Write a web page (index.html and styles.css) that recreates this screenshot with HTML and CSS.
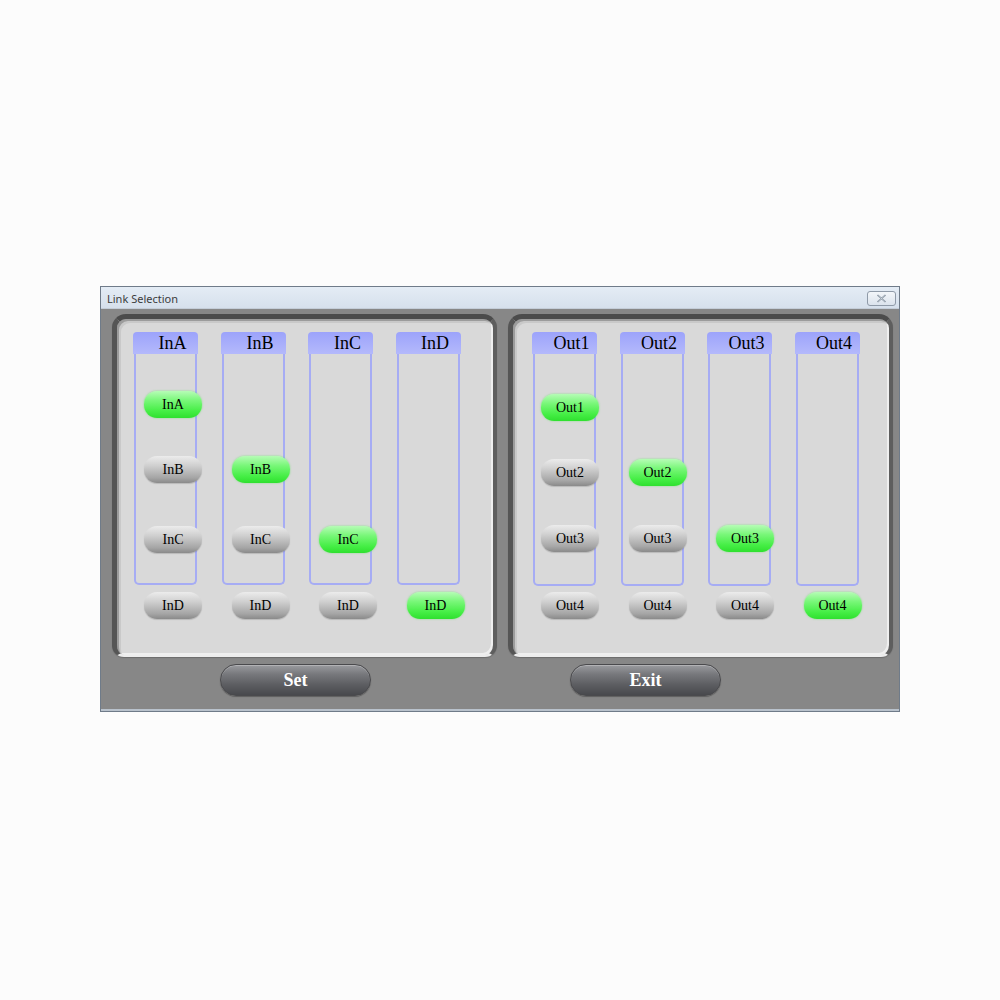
FILE: index.html
```html
<!DOCTYPE html>
<html>
<head>
<meta charset="utf-8">
<link rel="stylesheet" href="styles.css">
</head>
<body>
<div class="window">
  <div class="titlebar">
    <span class="title">Link Selection</span>
    <span class="close"><svg width="11" height="9" viewBox="0 0 11 9"><path d="M1.5 1 L9.5 8 M9.5 1 L1.5 8" stroke="#7d8a98" stroke-width="1.6" fill="none"/><path d="M1.5 1 L9.5 8 M9.5 1 L1.5 8" stroke="#e9eef4" stroke-width="0.5" fill="none"/></svg></span>
  </div>
  <div class="client">
    <div class="panels">
      <div class="panel panel-in">
        <div class="col">
          <div class="head">InA</div><div class="track"></div>
          <div class="pill on r1">InA</div><div class="pill r2">InB</div><div class="pill r3">InC</div><div class="pill r4">InD</div>
        </div>
        <div class="col">
          <div class="head">InB</div><div class="track"></div>
          <div class="pill on r2">InB</div><div class="pill r3">InC</div><div class="pill r4">InD</div>
        </div>
        <div class="col">
          <div class="head">InC</div><div class="track"></div>
          <div class="pill on r3">InC</div><div class="pill r4">InD</div>
        </div>
        <div class="col">
          <div class="head">InD</div><div class="track"></div>
          <div class="pill on r4">InD</div>
        </div>
      </div>
      <div class="panel panel-out">
        <div class="col">
          <div class="head">Out1</div><div class="track"></div>
          <div class="pill on r1">Out1</div><div class="pill r2">Out2</div><div class="pill r3">Out3</div><div class="pill r4">Out4</div>
        </div>
        <div class="col">
          <div class="head">Out2</div><div class="track"></div>
          <div class="pill on r2">Out2</div><div class="pill r3">Out3</div><div class="pill r4">Out4</div>
        </div>
        <div class="col">
          <div class="head">Out3</div><div class="track"></div>
          <div class="pill on r3">Out3</div><div class="pill r4">Out4</div>
        </div>
        <div class="col">
          <div class="head">Out4</div><div class="track"></div>
          <div class="pill on r4">Out4</div>
        </div>
      </div>
    </div>
    <div class="actions">
      <div class="btn">Set</div>
      <div class="btn">Exit</div>
    </div>
  </div>
</div>
</body>
</html>
```
FILE: styles.css
```css
html, body {
  margin: 0;
  padding: 0;
  background: #fcfcfc;
}
body {
  padding-top: 286px;
  padding-left: 100px;
}
.window {
  width: 800px;
  height: 426px;
  box-sizing: border-box;
  border: 1px solid #6f7b89;
  background: #878787;
}
.titlebar {
  height: 22px;
  box-sizing: border-box;
  display: flex;
  align-items: center;
  justify-content: space-between;
  padding: 0 3px 0 6px;
  background: linear-gradient(#e4ecf5, #d6e0ec);
  border-bottom: 1px solid #c4cdd8;
}
.title {
  font-family: "Noto Sans", "Open Sans", sans-serif;
  font-size: 11px;
  color: #3c3c3c;
  margin-top: 1px;
}
.close {
  width: 29px;
  height: 15px;
  box-sizing: border-box;
  border: 1px solid #8f9aa8;
  border-radius: 3px;
  background: linear-gradient(#f3f6fa, #dbe3ec);
  display: flex;
  align-items: center;
  justify-content: center;
  margin-top: 2px;
}
.client {
  height: 402px;
  box-sizing: border-box;
  padding: 5px 6px 0 11px;
  background: #878787;
  border-bottom: 2px solid #b9c2cc;
}
.panels {
  display: flex;
  gap: 11px;
}
.panel {
  width: 385px;
  height: 343px;
  box-sizing: border-box;
  background: #d9d9d9;
  border-style: solid;
  border-width: 5px 4px 2px 5px;
  border-color: #4b4b4b #5e5e5e #ededed #555555;
  border-radius: 14px 14px 12px 12px;
  box-shadow: inset 2px 2px 0 #9c9c9c, inset 4px 4px 0 #c9c9c9, inset -2px -2px 0 #efefef, 0 1px 1px rgba(0,0,0,0.2);
  display: flex;
  gap: 22.5px;
  padding-top: 13px;
}
.panel-in {
  padding-left: 16px;
}
.panel-out {
  padding-left: 19px;
}
.col {
  width: 65px;
  display: grid;
  grid-template-columns: 65px;
  grid-template-rows: 22px 37px 27px 38px 27px 43px 27px 32px 7px 27px;
  align-content: start;
}
.panel-out .col {
  grid-template-rows: 22px 40px 27px 38px 27px 39px 27px 34px 6px 27px;
}
.head {
  grid-row: 1;
  grid-column: 1;
  height: 22px;
  border-radius: 4px 4px 0 0;
  background: linear-gradient(#9ca3fb, #b4b9fb);
  font-family: "Liberation Serif", serif;
  font-size: 18px;
  line-height: 23px;
  color: #000;
  text-align: center;
  padding-left: 14px;
  box-sizing: border-box;
}
.track {
  grid-row: 2 / 9;
  grid-column: 1;
  border: 2px solid #a6acf4;
  border-top: 0;
  border-radius: 0 0 5px 5px;
  margin: 0 1px;
}
.pill {
  grid-column: 1;
  justify-self: start;
  width: 58px;
  height: 27px;
  margin-left: 11px;
  border-radius: 13px;
  box-sizing: border-box;
  font-family: "Liberation Serif", serif;
  font-size: 14px;
  line-height: 27px;
  text-align: center;
  color: #000;
  background: linear-gradient(#ececec 0%, #d0d0d0 35%, #a6a6a6 80%, #8a8a8a 100%);
  box-shadow: 0 1px 1px rgba(0,0,0,0.15);
}
.panel-out .pill {
  margin-left: 9px;
}
.pill.on {
  background: linear-gradient(#b6fcb6 0%, #79f779 35%, #45ee45 75%, #2fe02f 100%);
  box-shadow: 0 0 2px rgba(60,230,60,0.6);
}
.r1 { grid-row: 3; }
.r2 { grid-row: 5; }
.r3 { grid-row: 7; }
.r4 { grid-row: 10; }
.actions {
  display: flex;
  gap: 199px;
  margin-top: 7px;
  padding-left: 108px;
}
.btn {
  width: 151px;
  height: 32px;
  box-sizing: border-box;
  border-radius: 16px;
  border: 1px solid #4a4a4d;
  background: linear-gradient(#9a9b9f 0%, #78797d 30%, #5d5e62 65%, #48494d 100%);
  box-shadow: inset 0 1px 0 rgba(255,255,255,0.25), 0 1px 1px rgba(0,0,0,0.3);
  font-family: "Liberation Serif", serif;
  font-weight: bold;
  font-size: 18px;
  line-height: 30px;
  color: #fff;
  text-align: center;
}
```
